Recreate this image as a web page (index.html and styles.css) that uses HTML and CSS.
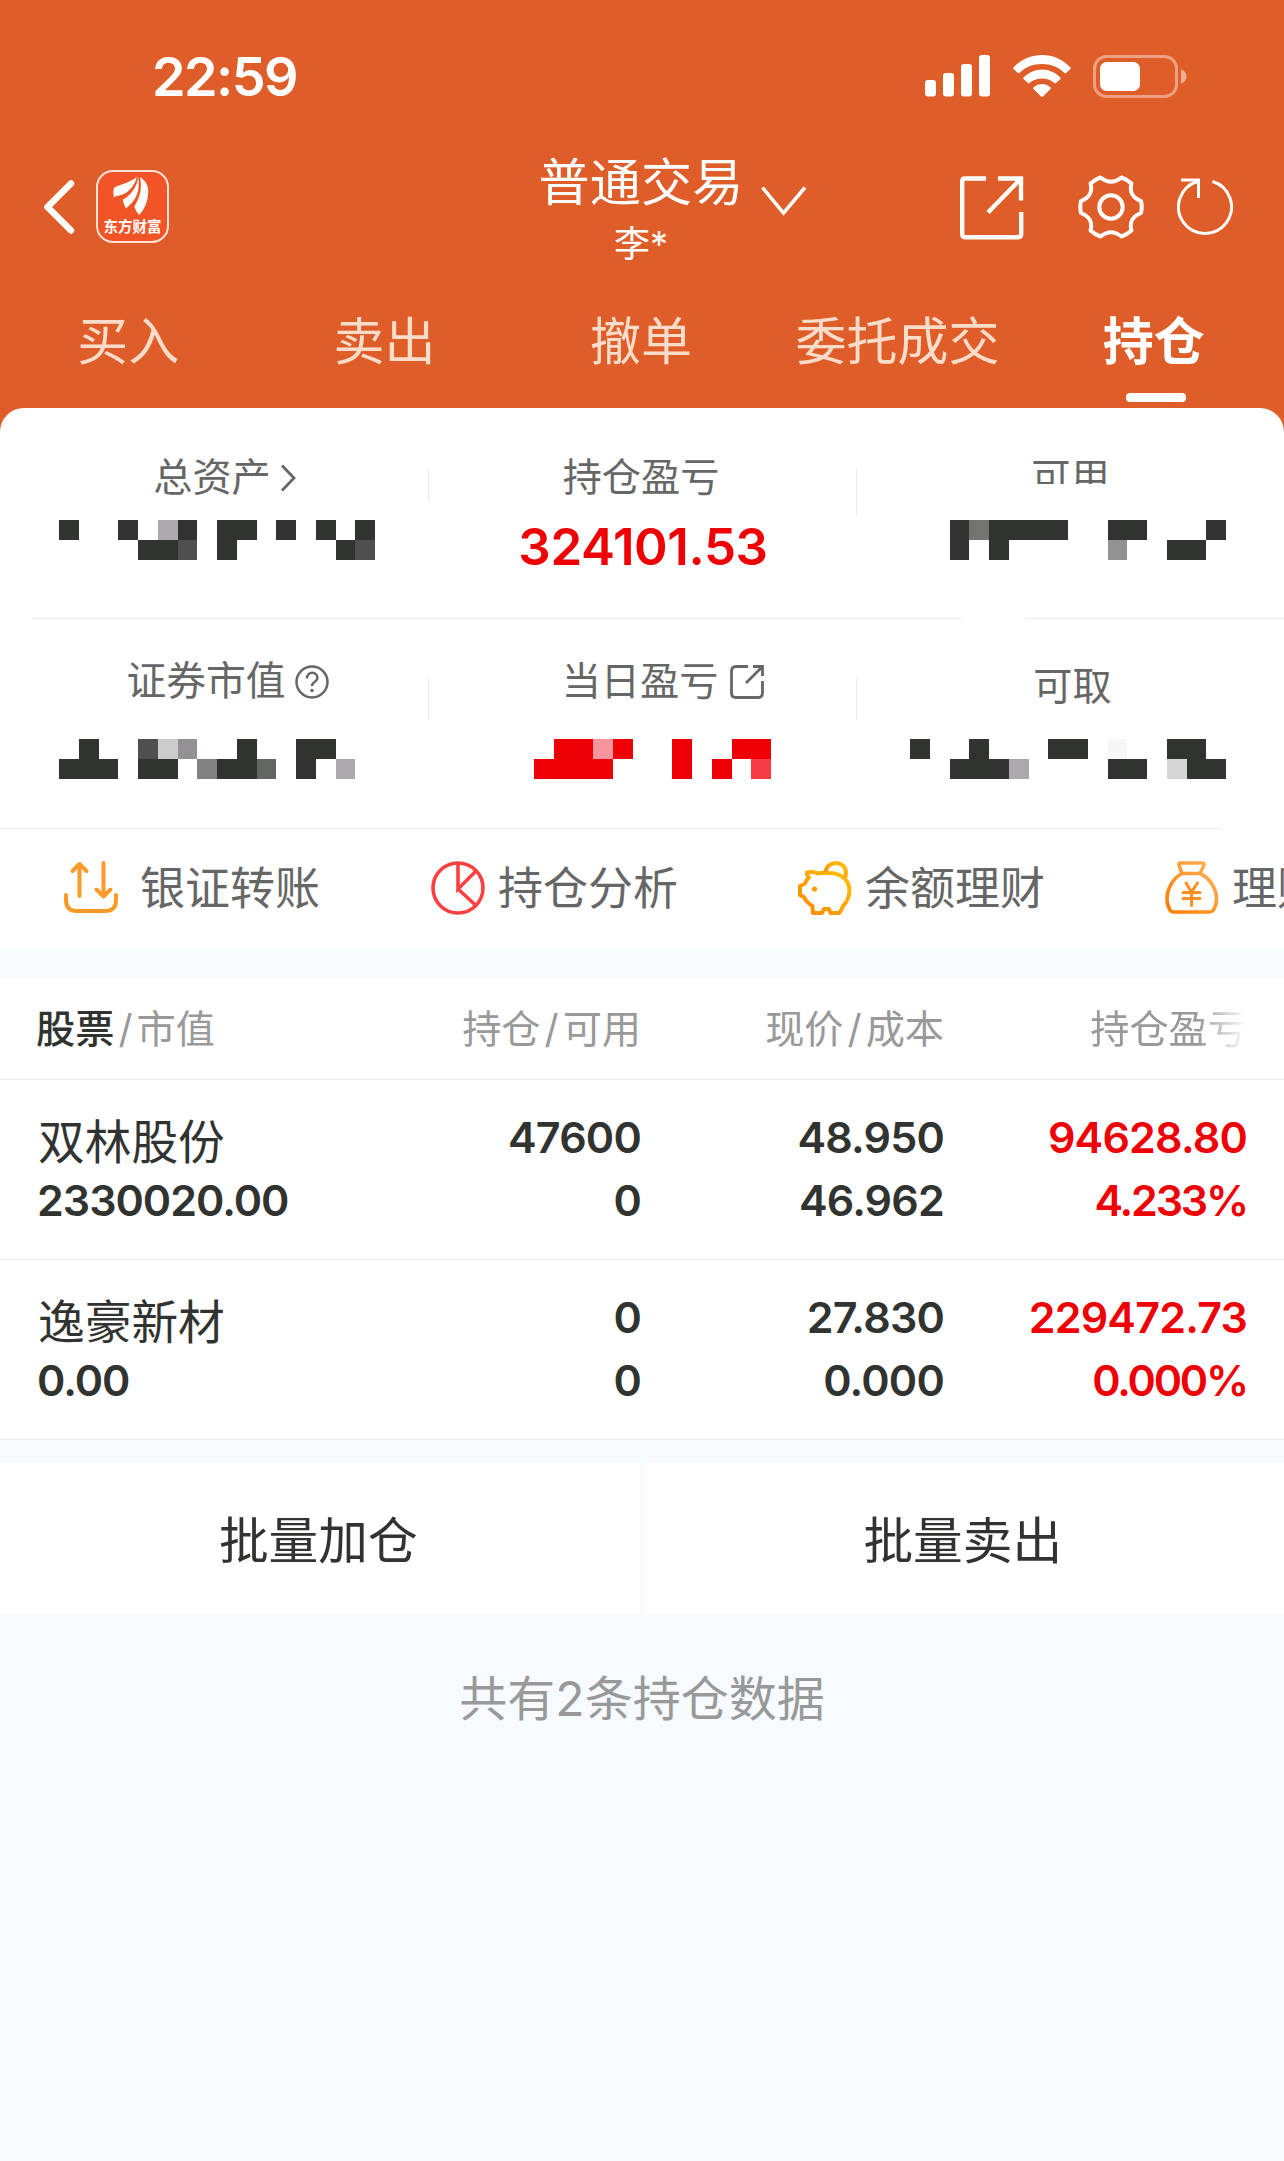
FILE: index.html
```html
<!DOCTYPE html>
<html lang="zh-CN">
<head>
    <meta charset="UTF-8">
    <meta name="viewport" content="width=device-width,initial-scale=1.0">
    <title>普通交易</title>
    <link rel="stylesheet" href="styles.css">
</head>
<body>
    <header>
        <!-- Status bar -->
        <div class="status">
            <span class="time">22:59</span>
            <svg class="signal" viewBox="0 0 66 42" fill="#fff">
                <rect x="0" y="25" width="11" height="16.500" rx="3"/>
                <rect x="18" y="18" width="11" height="23.500" rx="3"/>
                <rect x="36" y="9" width="11" height="32.500" rx="3"/>
                <rect x="54" y="0" width="11" height="41.500" rx="3"/>
            </svg>
            <svg class="wifi" viewBox="0 0 58 42" fill="#fff">
                <path d="M29 0C40 0 50 4.500 57.500 12.500Q58 13.200 57.500 14L53 18Q52 18.500 51.500 18C45.500 12 38 9 29 9S12.500 12 6.500 18Q6 18.500 5 18L.5 14Q0 13.200 .5 12.500C8 4.500 18 0 29 0Z"/>
                <path d="M29 14.500C36 14.500 42.500 17.500 47.500 22.500Q48 23.200 47.500 24L43 28Q42 28.500 41.500 28C38 25 34 23.500 29 23.500S20 25 16.500 28Q16 28.500 15 28L10.500 24Q10 23.200 10.500 22.500C15.500 17.500 22 14.500 29 14.500Z"/>
                <path d="M29 29C32 29 35 30 37.500 32.500Q38 33.200 37.500 34L30 41.500Q29 42.300 28 41.500L20.500 34Q20 33.200 20.500 32.500C23 30 26 29 29 29Z"/>
            </svg>
            <svg class="battery" viewBox="0 0 94 43">
                <rect x="1.500" y="1.500" width="82" height="40" rx="12" fill="none" stroke="#fff" stroke-opacity=".42" stroke-width="3"/>
                <rect x="7" y="7" width="40" height="29" rx="6.500" fill="#fff"/>
                <path d="M88 14.500C91.500 15.500 93.500 18.500 93.500 21.500S91.500 27.500 88 28.500Z" fill="#fff" fill-opacity=".5"/>
            </svg>
        </div>

        <!-- Title bar -->
        <div class="navbar">
            <svg class="back" viewBox="0 0 32 54"><path d="M28 3.500L4.500 27L28 50.500" fill="none" stroke="#fff" stroke-width="6.500" stroke-linecap="round" stroke-linejoin="round"/></svg>
            <div class="logo">
                <svg viewBox="0 0 40 42" fill="#fff">
                    <path d="M25.500 1C18 7 9 8.500 2 12C.5 15 1 18 1.500 22.500C5 20 9 21 13 18.500C19 15 24 8 25.500 1Z"/>
                    <path d="M27 1C26 12 19 20 11 25C11 28 12.500 30 14 34C19 30 23 26 25.500 20C28 14 28 6 27 1Z"/>
                    <path d="M29 1C31 12 30 20 23 32C24 36 26 38 28 41C35 34 38 23 37.500 14C36.500 7 33 4 29 1Z"/>
                </svg>
                <span>东方财富</span>
            </div>
            <div class="title">
                <h1>普通交易</h1>
                <p>李*</p>
            </div>
            <svg class="down" viewBox="0 0 46 31"><path d="M1.500 1.500L22.500 27L44 1.500" fill="none" stroke="#fff" stroke-width="3.500"/></svg>
            <svg class="share" viewBox="0 0 64 64" fill="none" stroke="#fff" stroke-width="4.400">
                <path d="M26 2.500H5Q2.200 2.500 2.200 5.500V58Q2.200 61.200 5 61.200H58Q61.200 61.200 61.200 58V36"/>
                <path d="M38 2.500H61V24.500M61 2.500L28 36.500"/>
            </svg>
            <svg class="gear" viewBox="0 0 66 64" fill="none" stroke="#fff" stroke-width="4" stroke-linejoin="round">
                <path d="M22.500 2.500Q33 11 43.500 2.500Q49 4.500 53.500 8.500C51 17 55 23 63 26Q64.500 32 63 38C55 41 51 47 53.500 55.500Q49 59.500 43.500 61.500Q33 53 22.500 61.500Q17 59.500 12.500 55.500C15 47 11 41 3 38Q1.500 32 3 26C11 23 15 17 12.500 8.500Q17 4.500 22.500 2.500Z"/>
                <circle cx="33" cy="32" r="11.700"/>
            </svg>
            <svg class="reload" viewBox="0 0 58 60" fill="none" stroke="#fff" stroke-width="3">
                <path d="M35.500 3.500A26.500 26.500 0 1 1 20.500 3.500"/>
                <path d="M4 2H21.500V20"/>
            </svg>
        </div>

        <nav>
            <a>买入</a>
            <a>卖出</a>
            <a>撤单</a>
            <a>委托成交</a>
            <a class="active">持仓</a>
        </nav>
    </header>

    <main>
        <!-- Account summary, the private amounts are covered with blocks -->
        <section class="summary">
            <div class="cell">
                <div class="label total">总资产<svg class="more" viewBox="0 0 16 28"><path d="M2 1.500L14 14L2 26.500" fill="none" stroke="#666" stroke-width="2.800"/></svg></div>
                <svg class="mask" viewBox="0 0 21.671 2" preserveAspectRatio="none" fill="#313330">
                    <path d="M3 0h1v1h-1zM6 0h1v1h-1zM9 0h1v1h-1zM7 1h2v1h-2zM11 0h2v1h-1v1h-1zM14 0h1v1h-1zM16 0h1v1h-1zM18 0h1v1h-1zM17 1h1v1h-1z"/>
                    <path d="M8 0h1v1h-1z" fill="#aba9ac"/>
                    <path d="M9 1h1v1h-1zM18 1h1v1h-1z" fill="#504f50"/>
                </svg>
            </div>
            <div class="cell">
                <div class="label">持仓盈亏</div>
                <div class="amount">324101.53</div>
            </div>
            <div class="cell">
                <div class="label cut">可用</div>
                <svg class="mask" viewBox="43.310 0 21.671 2" preserveAspectRatio="none" fill="#313330">
                    <path d="M48 0h1v2h-1zM50 0h4v1h-3v1h-1zM56 0h2v1h-2zM61 0h1v1h-1zM59 1h2v1h-2z"/>
                    <path d="M49 0h1v1h-1z" fill="#737472"/>
                    <path d="M56 1h1v1h-1z" fill="#949195"/>
                </svg>
            </div>
        </section>
        <div class="split"><i></i><i></i></div>
        <section class="summary second">
            <div class="cell">
                <div class="label market">证券市值<svg class="help" viewBox="0 0 34 34" fill="none" stroke="#666" stroke-width="2.500"><circle cx="17" cy="17" r="15.500"/><path d="M12 13.500C12 6 22.500 6 22.500 13C22.500 17 17 16.500 17 21"/><circle cx="17" cy="25.500" r="1" fill="#666" stroke-width="1.500"/></svg></div>
                <svg class="mask" viewBox="0 0 21.671 2" preserveAspectRatio="none" fill="#313330">
                    <path d="M4 0h1v1h1v1h-3v-1h1zM7 1h2v1h-2zM12 0h1v2h-2v-1h1zM15 0h2v1h-1v1h-1z"/>
                    <path d="M7 0h1v1h-1z" fill="#504f50"/>
                    <path d="M8 0h1v1h-1z" fill="#cdcccd"/>
                    <path d="M9 0h1v1h-1z" fill="#949195"/>
                    <path d="M10 1h1v1h-1z" fill="#838083"/>
                    <path d="M13 1h1v1h-1z" fill="#636562"/>
                    <path d="M17 1h1v1h-1z" fill="#aba9ac"/>
                </svg>
            </div>
            <div class="cell">
                <div class="label today">当日盈亏<svg class="open" viewBox="0 0 34 34" fill="none" stroke="#666" stroke-width="2.800"><path d="M18 1.500H6Q1.500 1.500 1.500 6V28Q1.500 32.500 6 32.500H28Q32.500 32.500 32.500 28V16M23 1.500H32.500V11M32.500 1.500L16 18"/></svg></div>
                <svg class="mask" viewBox="21.671 0 21.671 2" preserveAspectRatio="none" fill="#ee0005">
                    <path d="M28 0h2v1h1v1h-4v-1h1zM31 0h1v1h-1zM34 0h1v2h-1zM36 1h1v1h-1zM37 0h2v1h-2z"/>
                    <path d="M30 0h1v1h-1z" fill="#f8949c"/>
                    <path d="M38 1h1v1h-1z" fill="#f73c43"/>
                </svg>
            </div>
            <div class="cell">
                <div class="label low">可取</div>
                <svg class="mask" viewBox="43.310 0 21.671 2" preserveAspectRatio="none" fill="#313330">
                    <path d="M46 0h1v1h-1zM49 0h1v1h1v1h-3v-1h1zM53 0h2v1h-2zM56 1h2v1h-2zM59 0h2v1h1v1h-2v-1h-1z"/>
                    <path d="M51 1h1v1h-1z" fill="#aba9ac"/>
                    <path d="M56 0h1v1h-1z" fill="#f7f7f7"/>
                    <path d="M59 1h1v1h-1z" fill="#d6d6d6"/>
                </svg>
            </div>
        </section>
        <div class="line"></div>

        <!-- Shortcuts -->
        <section class="tools">
            <div class="tool first">
                <svg viewBox="0 0 54 54" fill="none" stroke="#fa9a28" stroke-width="4" stroke-linecap="round" stroke-linejoin="round">
                    <path d="M15.500 35V3M8.500 10L15.500 3L22.500 10M39.500 2V35M32.500 28.500L39.500 35.500L46.500 28.500M2 34V39Q2 50 13 50H41Q52 50 52 39V34"/>
                </svg>
                <span>银证转账</span>
            </div>
            <div class="tool">
                <svg viewBox="0 0 54 54" fill="none" stroke="#ff4040" stroke-width="3.600">
                    <circle cx="27" cy="27" r="25"/>
                    <path d="M27 2V28L45 10M27 28L45 44.500"/>
                </svg>
                <span>持仓分析</span>
            </div>
            <div class="tool">
                <svg viewBox="0 0 54 54" fill="none" stroke="url(#pig)" stroke-width="4" stroke-linejoin="round">
                    <defs><linearGradient id="pig" x1="0" y1="1" x2="1" y2="0"><stop offset="0" stop-color="#ff8800"/><stop offset="1" stop-color="#ffc000"/></linearGradient></defs>
                    <path d="M20 12.500Q15 10 9 11.500Q8.500 14 11 16.500Q8 19 7 22.500L2 25V34L6 36Q8.500 41.500 14.500 45L15 52H24L26 48H31L32.500 52H41Q44 49 45 45Q51 39 51.500 30C51.500 18 42 12 31 12Q24 11.500 20 12.500Z"/>
                    <path d="M27.500 11C29 -1 47 -1 48 11Q48 14 47 17"/>
                    <circle cx="16.500" cy="28" r="2.600" fill="#ff9900" stroke="none"/>
                </svg>
                <span>余额理财</span>
            </div>
            <div class="tool">
                <svg viewBox="0 0 54 54" fill="none" stroke="url(#bag)" stroke-width="3.600" stroke-linejoin="round" stroke-linecap="round">
                    <defs><linearGradient id="bag" x1="0" y1="1" x2="1" y2="0"><stop offset="0" stop-color="#ff7b00"/><stop offset="1" stop-color="#ffb45e"/></linearGradient></defs>
                    <path d="M17 12.500L14 4Q13.500 2 15.500 2H37.500Q39.500 2 39 4L35 12.500H17C8 17 2 28 2 38Q2 44 5 49Q6 51 9 51H44Q47 51 48.500 49Q51.500 44 51.500 38C51.500 28 45 17 35 12.500"/>
                    <path d="M21 22L26.500 31L32.500 22M26.500 31V44.500M18 31.500H35M18 37.500H35" stroke="#ff9020" stroke-width="3"/>
                </svg>
                <span>理财</span>
            </div>
        </section>

        <!-- Positions -->
        <section class="positions">
            <div class="row head">
                <div><b>股票</b><em>/</em>市值</div>
                <div>持仓<em>/</em>可用</div>
                <div>现价<em>/</em>成本</div>
                <div><span class="fade">持仓盈亏</span></div>
            </div>
            <div class="row">
                <div><strong>双林股份</strong><span>2330020.00</span></div>
                <div><span>47600</span><span>0</span></div>
                <div><span>48.950</span><span>46.962</span></div>
                <div class="up"><span>94628.80</span><span class="rate">4.233%</span></div>
            </div>
            <div class="row">
                <div><strong>逸豪新材</strong><span>0.00</span></div>
                <div><span>0</span><span>0</span></div>
                <div><span>27.830</span><span>0.000</span></div>
                <div class="up"><span>229472.73</span><span class="rate">0.000%</span></div>
            </div>
        </section>

        <div class="batch">
            <button>批量加仓</button>
            <button>批量卖出</button>
        </div>
    </main>
    <footer>共有2条持仓数据</footer>
</body>
</html>
```

FILE: styles.css
```css
* {
    box-sizing: border-box;
}
body {
    margin: 0;
    width: 1284px;
    min-height: 2161px;
    background: #f7fbff;
    color: #313330;
    font-family: Inter, "Noto Sans CJK SC", sans-serif;
    overflow-x: hidden;
}
svg {
    display: block;
    flex: none;
}
header {
    height: 432px;
    background: #df5d28;
    color: #fff;
}

/* status bar */
.status {
    display: flex;
    align-items: center;
    height: 152px;
    padding-left: 152px;
}
.time {
    width: 773px;
    font-size: 54px;
    font-weight: 600;
    letter-spacing: -1.600px;
}
.signal {
    width: 66px;
    height: 42px;
}
.wifi {
    width: 58px;
    height: 42px;
    margin-left: 22px;
}
.battery {
    width: 94px;
    height: 43px;
    margin-left: 22px;
}

/* title bar */
.navbar {
    display: flex;
    align-items: flex-start;
    height: 148px;
    padding: 0 48px 0 43px;
}
.back {
    width: 32px;
    height: 54px;
    margin-top: 28px;
}
.logo {
    width: 73px;
    height: 73px;
    margin: 18px 0 0 21px;
    border: 2px solid #ffe3d6;
    border-radius: 17px;
    background: #f05427;
}
.logo svg {
    width: 39px;
    height: 40px;
    margin: 4px 0 0 14px;
}
.logo span {
    display: block;
    margin-top: 1px;
    font: 700 14.500px/18px "Noto Sans CJK SC", sans-serif;
    text-align: center;
    white-space: nowrap;
}
.title {
    width: 206px;
    margin-left: 369px;
    text-align: center;
}
.title h1 {
    margin: 0;
    font-size: 51.200px;
    font-weight: 400;
    line-height: 61px;
    white-space: nowrap;
}
.title p {
    margin: 7px 0 0;
    font-size: 36px;
    line-height: 48px;
}
.down {
    width: 46px;
    height: 31px;
    margin: 34px 0 0 17px;
}
.share {
    width: 64px;
    height: 64px;
    margin: 24px 0 0 153px;
}
.gear {
    width: 66px;
    height: 64px;
    margin: 23px 0 0 54px;
}
.reload {
    width: 58px;
    height: 60px;
    margin: 26px 0 0 33px;
}
nav {
    display: flex;
    width: 1282px;
    height: 102px;
}
nav a {
    flex: 1 1 0;
    display: flex;
    flex-direction: column;
    align-items: center;
    color: #f9dcc9;
    font-size: 51px;
    line-height: 83px;
    white-space: nowrap;
}
nav .active {
    color: #fff;
    font-weight: 700;
}
nav .active::after {
    content: "";
    width: 60px;
    height: 9px;
    margin: 10px 0 0 4px;
    border-radius: 4px;
    background: #fff;
}

/* account summary */
main {
    margin-top: -24px;
    border-radius: 24px 24px 0 0;
    background: #fff;
}
.summary {
    display: grid;
    grid-template-columns: 429px 428px 427px;
    height: 210px;
    padding-top: 44px;
}
.cell {
    background: linear-gradient(#ebebeb, #ebebeb) right 16px / 1px 33px no-repeat;
}
.cell:nth-child(2) {
    background-size: 1px 48px;
}
.cell:last-child {
    background: none;
}
.label {
    display: flex;
    justify-content: center;
    align-items: center;
    height: 50px;
    color: #666;
    font-size: 39.200px;
    line-height: 48px;
    white-space: nowrap;
}
.cell:nth-child(2) .label {
    padding-right: 4px;
}
.cell .mask {
    width: 428px;
    height: 40px;
    margin-top: 18px;
    shape-rendering: crispEdges;
}
.cell .total {
    padding-right: 5px;
}
.more {
    width: 16px;
    height: 28px;
    margin: 2px -25px 0 9px;
}
.cell .market {
    padding-right: 17px;
    font-size: 39.800px;
}
.help {
    width: 34px;
    height: 34px;
    margin: 2px -43px 0 9px;
}
.open {
    width: 34px;
    height: 34px;
    margin: 2px -44px 0 12px;
}
.cut {
    height: 32px;
    margin-bottom: 36px;
    align-items: flex-start;
    line-height: 49px;
    overflow: hidden;
}
.cut + .mask {
    margin-top: 0;
}
.amount {
    margin-top: 17px;
    color: #ee0005;
    font-size: 51px;
    font-weight: 600;
    letter-spacing: -.4px;
    line-height: 56px;
    text-align: center;
}
.split {
    display: flex;
    height: 1px;
    padding-left: 32px;
    gap: 60px;
}
.split i {
    width: 930px;
    background: #ebebeb;
}
.split i + i {
    flex: 1;
    margin-left: 3px;
}
.second {
    height: 209px;
    padding-top: 37px;
}
.second .cell {
    background-position: right 22px;
    background-size: 1px 42px;
}
.second .mask {
    margin-top: 33px;
}
.low {
    padding: 10px 0 0 4px;
}
.line {
    width: 1222px;
    height: 1px;
    background: #ebebeb;
}

/* shortcuts */
.tools {
    display: flex;
    height: 119px;
    padding: 0 0 0 64px;
    overflow: hidden;
}
.tool {
    display: flex;
    flex: none;
    align-items: center;
    width: 367px;
    gap: 13px;
    color: #666;
    font-size: 45px;
    line-height: 60px;
    white-space: nowrap;
}
.tool svg {
    width: 54px;
    height: 54px;
    margin-bottom: 1px;
}
.tool span {
    margin-top: 1px;
}
.first {
    gap: 22px;
}

/* positions */
.positions {
    border-top: 30px solid #f7fbff;
}
.row {
    display: grid;
    grid-template-columns: 341px 263px 303px 303px;
    height: 180px;
    padding: 33px 0 0 37px;
    border-bottom: 1px solid #ebebeb;
    text-align: right;
}
.row > :first-child {
    text-align: left;
}
.row span {
    display: block;
    height: 63px;
    font-size: 43px;
    font-weight: 600;
    letter-spacing: -.8px;
    line-height: 48px;
}
.row > :first-child span {
    letter-spacing: -1px;
}
.row strong {
    display: block;
    height: 63px;
    padding: 2px 0 0 1px;
    font-size: 46.700px;
    font-weight: 400;
    line-height: 54px;
}
.row .up {
    color: #ee0005;
}
.row .rate {
    letter-spacing: -2.200px;
}
.head {
    height: 102px;
    padding: 24px 0 0 36px;
    color: #999;
    font-size: 39.200px;
    line-height: 54px;
}
.head > * {
    margin-right: -1px;
}
.head b {
    color: #313330;
    font-weight: 500;
}
.head em {
    margin: 0 4px;
    font-style: normal;
}
.row .fade {
    font-size: 39.200px;
    font-weight: 400;
    letter-spacing: 0;
    line-height: 54px;
    -webkit-mask-image: linear-gradient(to right, #000 calc(100% - 50px), transparent);
    mask-image: linear-gradient(to right, #000 calc(100% - 50px), transparent);
}

/* batch buttons */
.batch {
    display: flex;
    gap: 5px;
    padding-top: 23px;
    background: #f7fbff;
}
.batch button {
    flex: 1;
    height: 151px;
    padding: 4px 3px 0 0;
    border: 0;
    background: #fff;
    color: #313330;
    font: 400 49.700px/60px Inter, "Noto Sans CJK SC", sans-serif;
}
footer {
    margin-top: 50px;
    color: #999;
    font-size: 48px;
    line-height: 70px;
    text-align: center;
}
```
